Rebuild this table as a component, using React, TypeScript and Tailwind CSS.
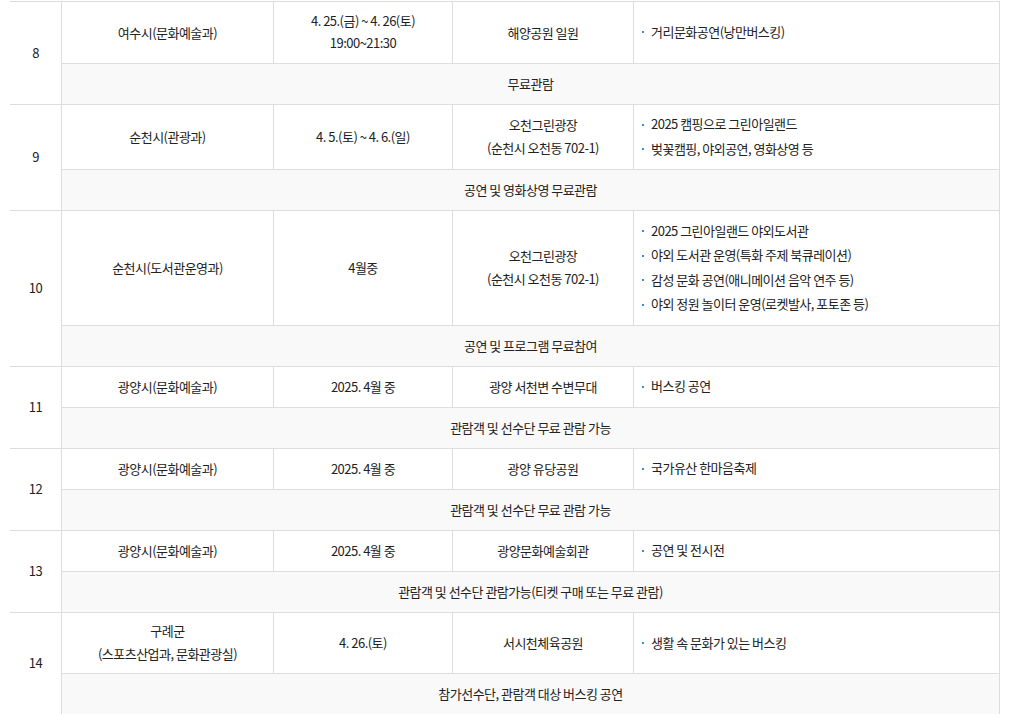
type Event = {
  no: number
  agency: string[]
  date: string[]
  place: string[]
  items: string[]
  note: string
}

const events: Event[] = [
  {
    no: 8,
    agency: ['여수시(문화예술과)'],
    date: ['4. 25.(금) ~ 4. 26(토)', '19:00~21:30'],
    place: ['해양공원 일원'],
    items: ['거리문화공연(낭만버스킹)'],
    note: '무료관람',
  },
  {
    no: 9,
    agency: ['순천시(관광과)'],
    date: ['4. 5.(토) ~ 4. 6.(일)'],
    place: ['오천그린광장', '(순천시 오천동 702-1)'],
    items: ['2025 캠핑으로 그린아일랜드', '벚꽃캠핑, 야외공연, 영화상영 등'],
    note: '공연 및 영화상영 무료관람',
  },
  {
    no: 10,
    agency: ['순천시(도서관운영과)'],
    date: ['4월중'],
    place: ['오천그린광장', '(순천시 오천동 702-1)'],
    items: [
      '2025 그린아일랜드 야외도서관',
      '야외 도서관 운영(특화 주제 북큐레이션)',
      '감성 문화 공연(애니메이션 음악 연주 등)',
      '야외 정원 놀이터 운영(로켓발사, 포토존 등)',
    ],
    note: '공연 및 프로그램 무료참여',
  },
  {
    no: 11,
    agency: ['광양시(문화예술과)'],
    date: ['2025. 4월 중'],
    place: ['광양 서천변 수변무대'],
    items: ['버스킹 공연'],
    note: '관람객 및 선수단 무료 관람 가능',
  },
  {
    no: 12,
    agency: ['광양시(문화예술과)'],
    date: ['2025. 4월 중'],
    place: ['광양 유당공원'],
    items: ['국가유산 한마음축제'],
    note: '관람객 및 선수단 무료 관람 가능',
  },
  {
    no: 13,
    agency: ['광양시(문화예술과)'],
    date: ['2025. 4월 중'],
    place: ['광양문화예술회관'],
    items: ['공연 및 전시전'],
    note: '관람객 및 선수단 관람가능(티켓 구매 또는 무료 관람)',
  },
  {
    no: 14,
    agency: ['구례군', '(스포츠산업과, 문화관광실)'],
    date: ['4. 26.(토)'],
    place: ['서시천체육공원'],
    items: ['생활 속 문화가 있는 버스킹'],
    note: '참가선수단, 관람객 대상 버스킹 공연',
  },
]

function Lines({ lines }: { lines: string[] }) {
  return (
    <>
      {lines.map((l, i) => (
        <div key={i} className={lines.length > 1 ? 'leading-[22.5px]' : 'leading-[23px]'}>
          {l}
        </div>
      ))}
    </>
  )
}

const cell = 'border-r border-b border-[#dddddd] align-middle text-center px-2 py-[7.75px]'

export default function App() {
  return (
    <div
      className="bg-white min-h-screen pt-px text-[13px] leading-[20px] text-[#222222] tracking-[-0.04em]"
      style={{ fontFamily: '"Noto Sans CJK KR", "Noto Sans", sans-serif' }}
    >
      <table className="ml-[10px] w-[990px] table-fixed border-separate border-spacing-0 border-t border-[#dddddd]">
        <colgroup>
          <col className="w-[52px]" />
          <col className="w-[212px]" />
          <col className="w-[179px]" />
          <col className="w-[181px]" />
          <col className="w-[366px]" />
        </colgroup>
        <tbody>
          {events.map((e) => (
            <>
              <tr key={`${e.no}-a`}>
                <td rowSpan={2} className={cell}>
                  {e.no}
                </td>
                <td className={cell}>
                  <Lines lines={e.agency} />
                </td>
                <td className={cell}>
                  <Lines lines={e.date} />
                </td>
                <td className={cell}>
                  <Lines lines={e.place} />
                </td>
                <td className="border-r border-b border-[#dddddd] align-middle text-left pl-[8px] pr-2 py-[7.75px]">
                  <ul>
                    {e.items.map((it) => (
                      <li key={it} className="flex items-center gap-[7px] leading-[24.5px]">
                        <span className="w-[2px] h-[2px] shrink-0 bg-[#3b8ec2]" />
                        <span>{it}</span>
                      </li>
                    ))}
                  </ul>
                </td>
              </tr>
              <tr key={`${e.no}-b`}>
                <td colSpan={4} className="border-r border-b border-[#dddddd] align-middle text-center px-2 py-2 bg-[#f9f9f9]">
                  <div className="leading-[24px]">{e.note}</div>
                </td>
              </tr>
            </>
          ))}
        </tbody>
      </table>
    </div>
  )
}
